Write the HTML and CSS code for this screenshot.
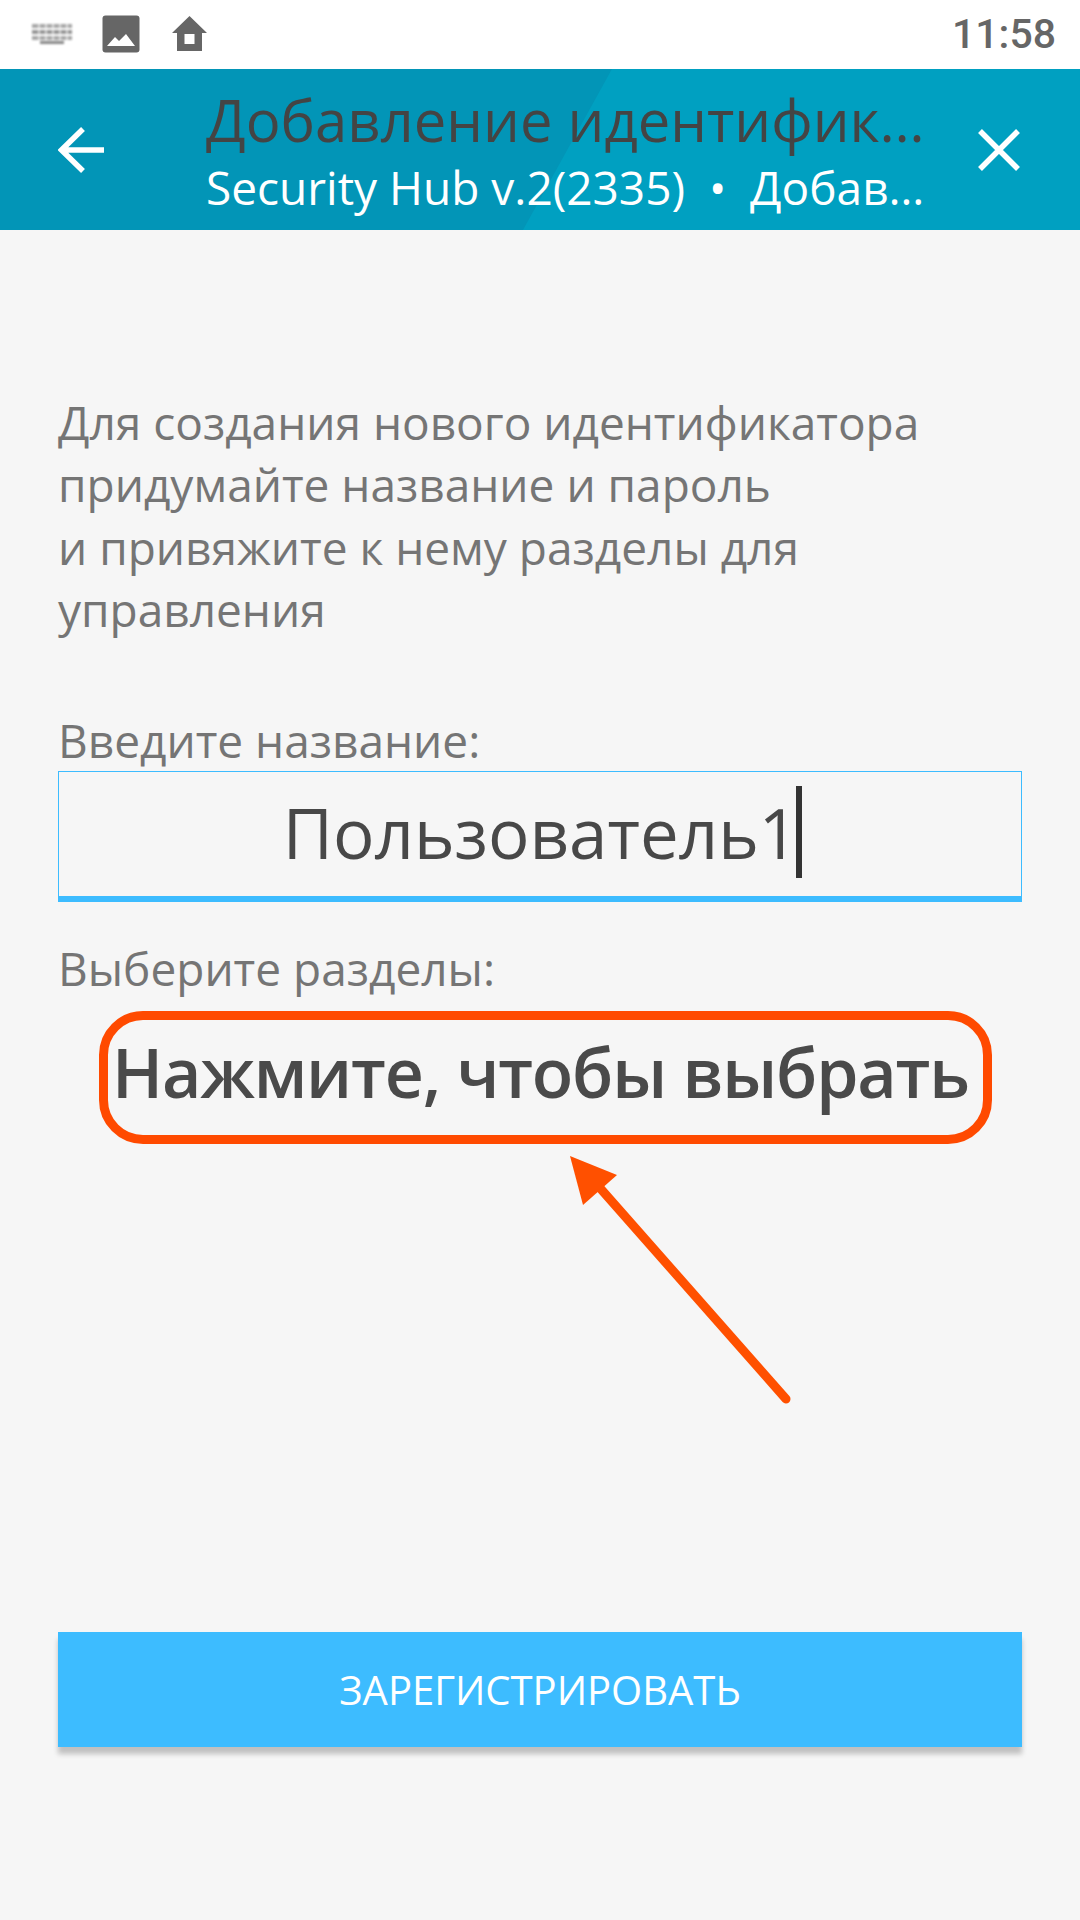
FILE: index.html
```html
<!DOCTYPE html>
<html lang="ru">
<head>
    <meta charset="UTF-8">
    <meta name="viewport" content="width=device-width, initial-scale=1.0">
    <title>Добавление идентификатора</title>
    <link rel="stylesheet" href="styles.css">
</head>
<body>
    <!-- Status bar -->
    <div class="status-bar">
        <div class="status-icons">
            <svg class="icon-keyboard" width="42" height="22" viewBox="0 0 42 22">
                <g fill="#8a8a8a">
                    <rect x="1" y="1" width="40" height="4" opacity="0.75"/>
                    <rect x="1" y="7" width="40" height="4" opacity="0.9"/>
                    <rect x="1" y="13" width="40" height="4" opacity="0.75"/>
                    <rect x="9" y="18" width="24" height="3"/>
                </g>
                <g fill="#fff" opacity="0.6">
                    <rect x="7" y="0" width="2" height="18"/>
                    <rect x="14" y="0" width="2" height="18"/>
                    <rect x="21" y="0" width="2" height="18"/>
                    <rect x="28" y="0" width="2" height="18"/>
                    <rect x="35" y="0" width="2" height="18"/>
                </g>
            </svg>
            <svg width="38" height="38" viewBox="0 0 38 38">
                <rect width="37" height="37" x="0.5" y="0.5" rx="3" fill="#666"/>
                <path d="M5 31 L13 22 L17 26 L24 19 L33 31 Z" fill="#fff"/>
            </svg>
            <svg width="35" height="36" viewBox="0 0 35 36">
                <path d="M17.5 0 L35 17 L30 17 L30 35 L5 35 L5 17 L0 17 Z" fill="#666"/>
                <rect x="12.500" y="18" width="10" height="10" fill="#fff"/>
            </svg>
        </div>
        <span class="clock">11:58</span>
    </div>

    <!-- Header -->
    <header class="app-header">
        <button class="icon-btn">
            <svg width="46" height="46" viewBox="0 0 46 46">
                <path d="M46 23 H4 M25 2 L3.500 23 L25 44" fill="none" stroke="#fff" stroke-width="5.500"/>
            </svg>
        </button>
        <div class="header-titles">
            <div class="header-title">Добавление идентификатора</div>
            <div class="header-sub">Security Hub v.2(2335) &nbsp;•&nbsp; Добавление идентификатора</div>
        </div>
        <button class="icon-btn">
            <svg width="42" height="42" viewBox="0 0 42 42">
                <path d="M2 2 L40 40 M40 2 L2 40" fill="none" stroke="#fff" stroke-width="5.500"/>
            </svg>
        </button>
    </header>

    <!-- Form -->
    <main class="content">
        <p class="intro">Для создания нового идентификатора<br>придумайте название и пароль<br>и привяжите к нему разделы для<br>управления</p>

        <label class="field-label">Введите название:</label>
        <div class="name-input">
            <span>Пользователь1</span><span class="caret"></span>
        </div>

        <label class="field-label second">Выберите разделы:</label>
        <div class="section-picker">Нажмите, чтобы выбрать</div>

        <button class="submit-btn">ЗАРЕГИСТРИРОВАТЬ</button>

        <!-- Annotation arrow -->
        <svg class="hint-arrow" width="250" height="275" viewBox="0 0 250 275">
            <path d="M45 48 L231 259" fill="none" stroke="#ff5000" stroke-width="9" stroke-linecap="round"/>
            <path d="M15 16 L62 35 L28 65 Z" fill="#ff5000"/>
        </svg>
    </main>
</body>
</html>
```

FILE: styles.css
```css
/* General Styling */
* {
    margin: 0;
    padding: 0;
    box-sizing: border-box;
    font-family: "Open Sans", "Noto Sans", sans-serif;
}

body {
    width: 1080px;
    height: 1920px;
    background: #f6f6f6;
    overflow: hidden;
}

/* Status bar */
.status-bar {
    height: 69px;
    background: #fff;
    display: flex;
    align-items: center;
    justify-content: space-between;
    padding: 0 24px 2px 31px;
}

.status-icons {
    display: flex;
    align-items: center;
    gap: 32px;
}

.icon-keyboard {
    filter: blur(0.8px);
    margin-right: -3px;
}

.clock {
    font-family: Roboto, sans-serif;
    font-weight: 500;
    font-size: 41px;
    color: #666;
}

/* Header */
.app-header {
    position: relative;
    height: 161px;
    background: #00a0c1;
    display: flex;
    align-items: center;
    padding: 0 58px;
}

.app-header::before {
    content: "";
    position: absolute;
    inset: 0;
    background: #0295b7;
    clip-path: polygon(0 0, 612px 0, 523px 100%, 0 100%);
}

.icon-btn {
    position: relative;
    flex: none;
    display: flex;
    background: none;
    border: none;
}

.header-titles {
    position: relative;
    width: 720px;
    margin: 0 52px 0 102px;
    padding-top: 3px;
}

.header-title,
.header-sub {
    white-space: nowrap;
    overflow: hidden;
    text-overflow: ellipsis;
}

.header-title {
    font-size: 58px;
    line-height: 72px;
    color: #444;
}

.header-sub {
    font-size: 46px;
    line-height: 62px;
    color: #fff;
}

/* Form */
.content {
    position: relative;
    height: 1690px;
    padding: 161px 58px 0;
    display: flex;
    flex-direction: column;
}

.intro {
    font-size: 46px;
    line-height: 62.300px;
    color: #757575;
}

.field-label {
    font-size: 46px;
    line-height: 58px;
    color: #757575;
    margin-top: 71px;
    padding-bottom: 2px;
}

.field-label.second {
    margin-top: 37px;
}

.name-input {
    height: 131px;
    padding: 0 0 4px 5px;
    border: 1px solid #3dbcff;
    border-bottom: 6px solid #3dbcff;
    display: flex;
    align-items: center;
    justify-content: center;
    font-size: 69px;
    color: #484848;
}

.caret {
    width: 6px;
    height: 92px;
    margin-left: -2px;
    background: #333;
}

.section-picker {
    align-self: center;
    width: 893px;
    height: 133px;
    margin: 12px 0 0 11px;
    padding: 0 10px 12px 0;
    border: 9px solid #ff4a00;
    border-radius: 44px;
    display: flex;
    align-items: center;
    justify-content: center;
    font-size: 68px;
    font-weight: 600;
    letter-spacing: -1.200px;
    color: #4a4a4a;
    white-space: nowrap;
}

.submit-btn {
    height: 115px;
    margin-top: auto;
    margin-bottom: 173px;
    background: #3dbcff;
    border: none;
    color: #fff;
    font-size: 40px;
    box-shadow: 0 7px 5px rgba(0, 0, 0, 0.22);
}

/* Annotation arrow over the form */
.hint-arrow {
    position: absolute;
    left: 555px;
    top: 910px;
}
```
